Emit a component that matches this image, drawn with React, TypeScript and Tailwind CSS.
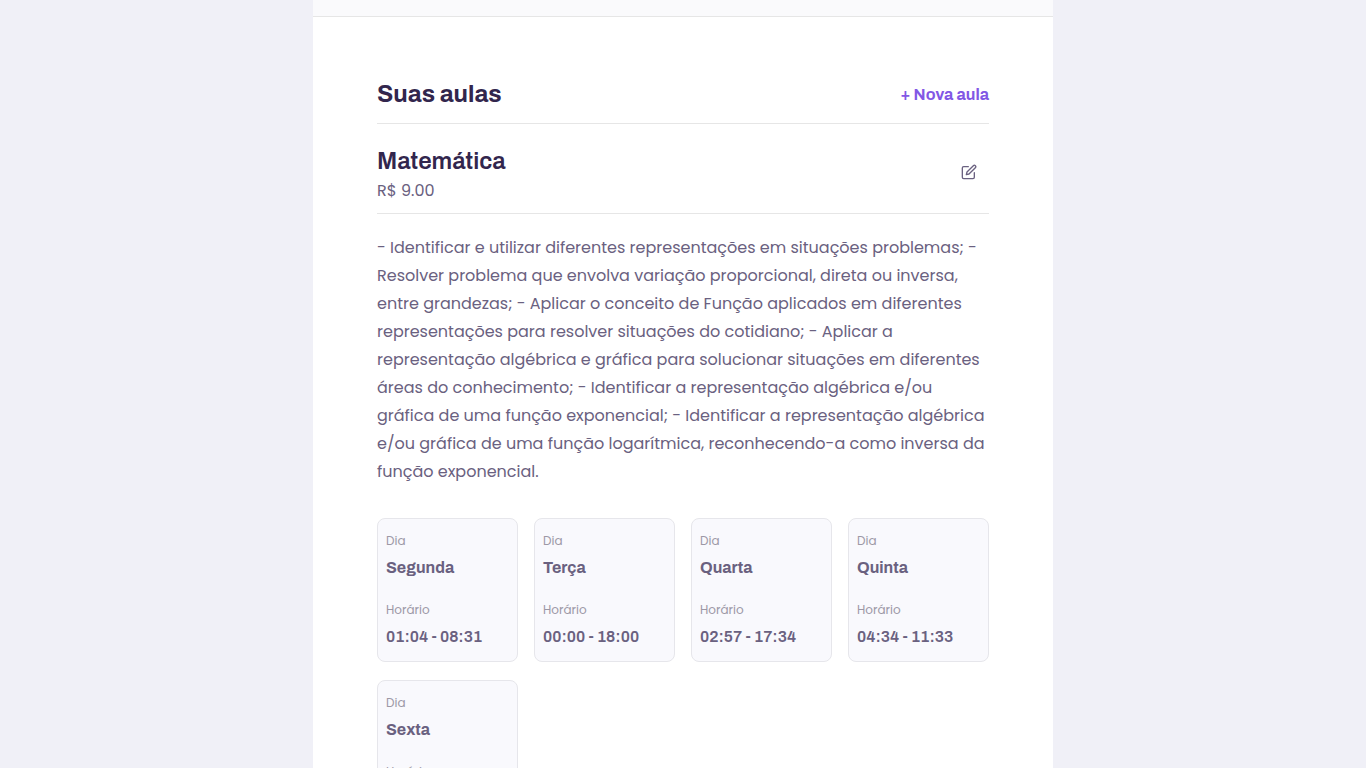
import { FiEdit } from "react-icons/fi";

type Slot = { day: string; hours: string };

const description =
  "- Identificar e utilizar diferentes representações em situações problemas; - Resolver problema que envolva variação proporcional, direta ou inversa, entre grandezas; - Aplicar o conceito de Função aplicados em diferentes representações para resolver situações do cotidiano; - Aplicar a representação algébrica e gráfica para solucionar situações em diferentes áreas do conhecimento; - Identificar a representação algébrica e/ou gráfica de uma função exponencial; - Identificar a representação algébrica e/ou gráfica de uma função logarítmica, reconhecendo-a como inversa da função exponencial.";

const slots: Slot[] = [
  { day: "Segunda", hours: "01:04 - 08:31" },
  { day: "Terça", hours: "00:00 - 18:00" },
  { day: "Quarta", hours: "02:57 - 17:34" },
  { day: "Quinta", hours: "04:34 - 11:33" },
  { day: "Sexta", hours: "08:00 - 12:00" },
];

function SlotCard({ day, hours }: Slot) {
  return (
    <dl className="rounded-lg border border-[#e6e6eb] bg-[#f9f9fd] px-2 py-3">
      <dt className="text-xs leading-5 text-[#9c98a6]">Dia</dt>
      <dd className="mt-[5px] font-['Archivo','Liberation_Sans',sans-serif] text-base leading-6 font-bold text-[#6a6180]">{day}</dd>
      <dt className="mt-5 text-xs leading-5 text-[#9c98a6]">Horário</dt>
      <dd className="mt-[5px] font-['Archivo','Liberation_Sans',sans-serif] text-base leading-6 font-semibold text-[#6a6180]">{hours}</dd>
    </dl>
  );
}

export default function App() {
  return (
    <div className="h-screen overflow-hidden bg-[#f0f0f7] font-['Poppins','Inter',sans-serif] text-[#6a6180]">
      <main className="mx-auto min-h-full max-w-[740px] bg-white">
        <div className="h-[17px] border-b border-[#e6e6e6] bg-[#fafafc]" />
        <section className="px-16 pt-[60px] pb-16">
          <header className="flex items-center justify-between border-b border-[#e6e6e6] pb-3">
            <h1 className="font-['Archivo','Liberation_Sans',sans-serif] text-2xl leading-[34px] font-bold text-[#32264d]">Suas aulas</h1>
            <button type="button" className="pt-0.5 font-['Archivo','Liberation_Sans',sans-serif] text-base font-bold text-[#8257e5]">+ Nova aula</button>
          </header>
          <div className="mt-5 flex items-start justify-between border-b border-[#e6e6e6] pb-2.5">
            <div>
              <h2 className="font-['Archivo','Liberation_Sans',sans-serif] text-2xl leading-[34px] font-semibold text-[#32264d]">Matemática</h2>
              <p className="text-base leading-[25px]">R$ 9.00</p>
            </div>
            <button type="button" aria-label="Editar aula" className="mt-2 p-3">
              <FiEdit size={16} />
            </button>
          </div>
          <p className="mt-5 text-base leading-7">{description}</p>
          <div className="mt-8 grid grid-cols-4 gap-x-4 gap-y-[18px]">
            {slots.map((slot) => (
              <SlotCard key={slot.day} {...slot} />
            ))}
          </div>
        </section>
      </main>
    </div>
  );
}
